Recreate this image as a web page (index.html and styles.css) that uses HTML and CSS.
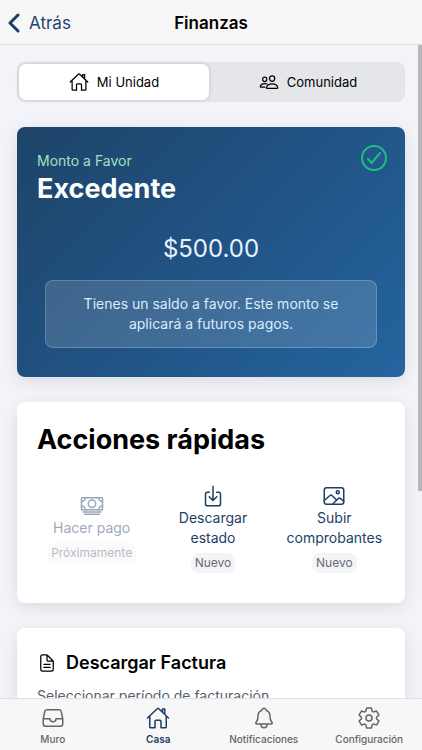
FILE: index.html
```html
<!DOCTYPE html>
<html lang="es">
<head>
<meta charset="utf-8">
<meta name="viewport" content="width=device-width, initial-scale=1">
<title>Finanzas</title>
<link rel="stylesheet" href="styles.css">
</head>
<body>
<header class="topbar">
  <a class="back" href="#"><svg class="back-icon" viewBox="0 0 12 20"><path d="M10 2L2 10l8 8"/></svg>Atrás</a>
  <h1 class="title">Finanzas</h1>
</header>
<main class="content">
  <div class="segment">
    <button class="segment-button selected" type="button">
      <svg class="icon icon-small" viewBox="0 0 512 512"><path d="M80 212v236a16 16 0 0016 16h96V328a24 24 0 0124-24h80a24 24 0 0124 24v136h96a16 16 0 0016-16V212M480 256L266.89 52c-5-5.28-16.69-5.34-21.78 0L32 256M400 179V64h-48v69"/></svg>
      Mi Unidad
    </button>
    <button class="segment-button" type="button">
      <svg class="icon icon-small" viewBox="0 0 512 512"><path d="M402 168c-2.93 40.67-33.1 72-66 72s-63.12-31.32-66-72c-3-42.31 26.37-72 66-72s69 30.46 66 72zM336 304c-65.17 0-127.84 32.37-143.54 95.41-2.08 8.34 3.15 16.59 11.72 16.59h263.65c8.57 0 13.77-8.25 11.72-16.59C463.85 335.36 401.18 304 336 304zM200 185.94c-2.34 32.48-26.72 58.06-53 58.06s-50.7-25.57-53-58.06C91.61 152.15 115.34 128 147 128s55.39 24.77 53 57.94zM206 306c-18.05-8.27-37.93-11.45-59-11.45-52 0-102.1 25.85-114.65 76.2-1.65 6.66 2.53 13.25 9.37 13.25H154"/></svg>
      Comunidad
    </button>
  </div>

  <section class="card balance">
    <svg class="icon balance-check" viewBox="0 0 512 512"><path d="M448 256c0-106-86-192-192-192S64 150 64 256s86 192 192 192 192-86 192-192zM352 176L217.6 336 160 272"/></svg>
    <p class="balance-label">Monto a Favor</p>
    <h2 class="heading">Excedente</h2>
    <p class="amount">$500.00</p>
    <p class="note">Tienes un saldo a favor. Este monto se aplicará a futuros pagos.</p>
  </section>

  <section class="card quick">
    <h2 class="heading">Acciones rápidas</h2>
    <div class="actions">
      <button class="action" type="button" disabled>
        <svg class="icon" viewBox="0 0 512 512"><rect x="32" y="80" width="448" height="256" rx="16"/><path d="M64 384h384M96 432h320"/><circle cx="256" cy="208" r="80"/><path d="M480 160a80 80 0 01-80-80M32 160a80 80 0 0080-80M480 256a80 80 0 00-80 80M32 256a80 80 0 0180 80"/></svg>
        <span>Hacer pago</span>
        <span class="badge">Próximamente</span>
      </button>
      <button class="action" type="button">
        <svg class="icon" viewBox="0 0 512 512"><path d="M336 176h40a40 40 0 0140 40v208a40 40 0 01-40 40H136a40 40 0 01-40-40V216a40 40 0 0140-40h40M176 272l80 80 80-80M256 48v288"/></svg>
        <span>Descargar estado</span>
        <span class="badge">Nuevo</span>
      </button>
      <button class="action" type="button">
        <svg class="icon" viewBox="0 0 512 512"><rect x="48" y="80" width="416" height="352" rx="48"/><circle cx="336" cy="176" r="32"/><path d="M304 335.79l-90.66-90.49a32 32 0 00-43.87-1.3L48 352M224 432l123.34-123.34a32 32 0 0143.11-2L464 368"/></svg>
        <span>Subir comprobantes</span>
        <span class="badge">Nuevo</span>
      </button>
    </div>
  </section>

  <section class="card invoice">
    <h2 class="invoice-title"><svg class="icon icon-small" viewBox="0 0 512 512"><path d="M416 221.25V416a48 48 0 01-48 48H144a48 48 0 01-48-48V96a48 48 0 0148-48h98.75a32 32 0 0122.62 9.37l141.26 141.26a32 32 0 019.37 22.62zM256 56v120a32 32 0 0032 32h120M176 288h160M176 368h160"/></svg>Descargar Factura</h2>
    <p class="invoice-text">Seleccionar período de facturación</p>
  </section>
  <div class="scroll-thumb"></div>
</main>
<nav class="tabs">
  <a class="tab" href="#"><svg class="icon" viewBox="0 0 512 512"><path d="M384 80H128c-26 0-43 14-48 40L48 272v112a48.14 48.14 0 0048 48h320a48.14 48.14 0 0048-48V272l-32-152c-5-27-23-40-48-40zM48 272h144M320 272h144M192 272a64 64 0 00128 0"/></svg>Muro</a>
  <a class="tab active" href="#"><svg class="icon" viewBox="0 0 512 512"><path d="M80 212v236a16 16 0 0016 16h96V328a24 24 0 0124-24h80a24 24 0 0124 24v136h96a16 16 0 0016-16V212M480 256L266.89 52c-5-5.28-16.69-5.34-21.78 0L32 256M400 179V64h-48v69"/></svg>Casa</a>
  <a class="tab" href="#"><svg class="icon" viewBox="0 0 512 512"><path d="M427.68 351.43C402 320 383.87 304 383.87 217.35 383.87 138 343.35 109.73 310 96c-4.43-1.82-8.6-6-9.95-10.55C294.2 65.54 277.8 48 256 48s-38.21 17.55-44 37.47c-1.35 4.6-5.52 8.71-9.95 10.53-33.39 13.75-73.87 41.92-73.87 121.35C128.13 304 110 320 84.32 351.43 73.68 364.45 83 384 101.61 384h308.88c18.51 0 27.77-19.61 17.19-32.57zM320 384v16a64 64 0 01-128 0v-16"/></svg>Notificaciones</a>
  <a class="tab" href="#"><svg class="icon" viewBox="0 0 512 512"><circle cx="256" cy="256" r="64"/><path d="M213 42h86q10 0 11 9l7 48q2 9 10 13l20 12q8 5 17 2l43-18q9-4 14 5l43 73q5 9-3 15l-36 28q-8 6-8 15v24q0 9 8 15l36 28q8 6 3 15l-43 73q-5 9-14 5l-43-18q-9-3-17 2l-20 12q-8 4-10 13l-7 48q-1 9-11 9h-86q-10 0-11-9l-7-48q-2-9-10-13l-20-12q-8-5-17-2l-43 18q-9 4-14-5l-43-73q-5-9 3-15l36-28q8-6 8-15v-24q0-9-8-15l-36-28q-8-6-3-15l43-73q5-9 14-5l43 18q9 3 17-2l20-12q8-4 10-13l7-48q1-9 11-9z"/></svg>Configuración</a>
</nav>
</body>
</html>
```
FILE: styles.css
```css
* { box-sizing: border-box; }

body {
  margin: 0;
  height: 100vh;
  display: flex;
  flex-direction: column;
  background: #f3f4f9;
  color: #000;
  font-family: Inter, "Liberation Sans", sans-serif;
  font-size: 14px;
  line-height: 20px;
}

h1, h2, p { margin: 0; }
button { font: inherit; color: inherit; border: 0; padding: 0; background: none; }
a { color: inherit; text-decoration: none; }

.icon {
  width: 24px;
  height: 24px;
  flex: none;
  fill: none;
  stroke: currentColor;
  stroke-width: 32;
  stroke-linecap: round;
  stroke-linejoin: round;
}
.icon-small { width: 20px; height: 20px; }

.topbar {
  flex: none;
  display: grid;
  grid-template-columns: 1fr auto 1fr;
  align-items: center;
  height: 45px;
  padding: 2px 8px 0;
  background: #f7f7f7;
  border-bottom: 1px solid #dedfe2;
}
.back { display: flex; align-items: center; gap: 9px; font-size: 17px; color: #1f456e; }
.back-icon { width: 12px; height: 20px; fill: none; stroke: #1a3f66; stroke-width: 3; stroke-linecap: round; stroke-linejoin: round; }
.title { font-size: 17px; font-weight: 600; }

.content {
  flex: 1;
  min-height: 0;
  position: relative;
  overflow: hidden;
  display: flex;
  flex-direction: column;
  gap: 25px;
  padding: 17px 17px 0;
}
.content > * { flex: none; }

.segment {
  display: grid;
  grid-template-columns: 1fr 1fr;
  gap: 4px;
  padding: 2px;
  background: #e5e6ea;
  border-radius: 8px;
}
.segment-button {
  display: flex;
  align-items: center;
  justify-content: center;
  gap: 8px;
  height: 36px;
  border-radius: 7px;
  font-size: 13px;
}
.segment-button.selected { background: #fff; box-shadow: 0 0 4px rgba(0, 0, 0, 0.16); }

.card {
  padding: 20px;
  background: #fff;
  border-radius: 8px;
  box-shadow: 0 4px 16px rgba(0, 0, 0, 0.1);
}
.heading { font-size: 27px; line-height: 36px; font-weight: 700; }

.balance {
  position: relative;
  padding: 24px 20px 29px;
  background: linear-gradient(135deg, #1e4468 0%, #20507f 40%, #24649f 100%);
  color: #fff;
}
.balance-check { position: absolute; top: 15px; right: 15px; width: 32px; height: 32px; color: #1fbd84; }
.balance-label { color: #a3e0bf; }
.amount { margin-top: 26px; font-size: 24px; line-height: 32px; color: #e8f2fc; text-align: center; }
.note {
  margin: 15px 8px 0;
  padding: 13px 24px;
  border: 1px solid rgba(255, 255, 255, 0.2);
  border-radius: 8px;
  background: rgba(255, 255, 255, 0.14);
  color: #dcebfa;
  text-align: center;
}

.quick { padding-bottom: 30px; }
.actions {
  display: grid;
  grid-template-columns: repeat(3, 1fr);
  align-items: center;
  margin: 26px -10px 0 -6px;
}
.action { display: flex; flex-direction: column; align-items: center; padding: 0 8px; color: #1c3f67; }
.action:disabled { color: #1c3f67; opacity: 0.45; }
.badge {
  margin-top: 5px;
  padding: 0 4px;
  border-radius: 8px;
  background: #f3f4f8;
  color: #666a73;
  font-size: 12px;
}

.invoice { padding-top: 25px; }
.invoice-title { display: flex; align-items: center; gap: 9px; font-size: 18px; font-weight: 600; }
.invoice-text { margin-top: 13px; color: #565f6d; }

.scroll-thumb { position: absolute; top: 0; right: 0; width: 4px; height: 446px; background: #b6b6ba; }

.tabs {
  flex: none;
  display: grid;
  grid-template-columns: repeat(4, 1fr);
  height: 52px;
  background: #f7f7f7;
  border-top: 1px solid #dedfe2;
}
.tab {
  display: flex;
  flex-direction: column;
  align-items: center;
  gap: 2px;
  padding-top: 7px;
  font-size: 10px;
  line-height: 14px;
  font-weight: 500;
  color: #656565;
}
.tab.active { color: #1a3f66; font-weight: 600; }
```
